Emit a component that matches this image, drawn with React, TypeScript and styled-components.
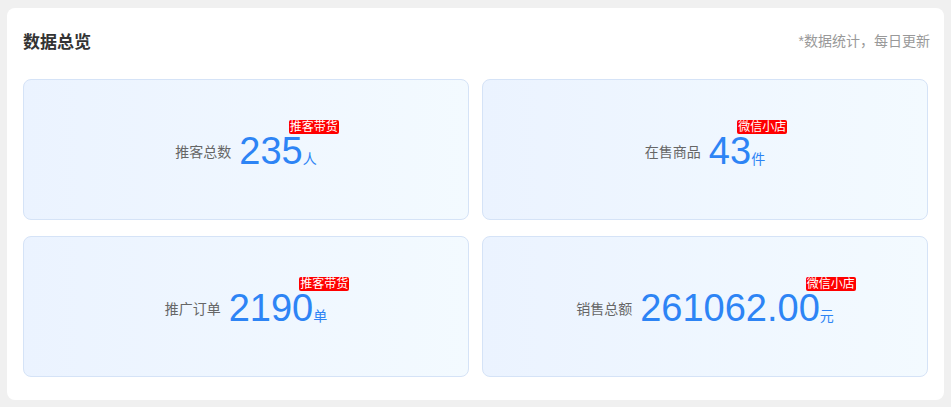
import { createGlobalStyle, styled } from 'styled-components';

const GlobalStyle = createGlobalStyle`
  html, body {
    margin: 0;
    padding: 0;
    background: #f0f0f0;
    font-family: 'Liberation Sans', Arial, 'Noto Sans CJK SC', sans-serif;
  }
`;

const SPage = styled.div`
  padding: 8px 7px 7px 7px;
`;

const SPanel = styled.div`
  background: #fff;
  border-radius: 8px;
  padding: 16px 16px 23px;
`;

const SHeader = styled.div`
  display: flex;
  align-items: center;
  justify-content: space-between;
  height: 32px;
  margin-bottom: 23px;
`;

const STitle = styled.h2`
  margin: 0;
  font-size: 17px;
  font-weight: 700;
  color: #333;
`;

const SNote = styled.span`
  font-size: 14px;
  color: #999;
  margin-right: -2px;
`;

const SGrid = styled.div`
  display: grid;
  grid-template-columns: 1fr 1fr;
  column-gap: 13px;
  row-gap: 16px;
`;

const SStatBox = styled.div`
  display: flex;
  align-items: center;
  justify-content: center;
  gap: 8px;
  height: 139px;
  border: 1px solid #d5e3f7;
  border-radius: 8px;
  background: linear-gradient(90deg, #ebf3ff 0%, #f3faff 100%);
`;

const SLabel = styled.span`
  font-size: 14px;
  color: #666;
  padding-top: 2px;
`;

const SValue = styled.span`
  display: inline-flex;
  align-items: baseline;
  padding-top: 2px;
`;

const SNumber = styled.span`
  position: relative;
  font-size: 38px;
  line-height: 38px;
  color: #2d84f5;
`;

const SUnit = styled.span`
  font-size: 14px;
  color: #2d84f5;
`;

const STag = styled.span`
  position: absolute;
  left: calc(100% - 14px);
  top: -12px;
  padding: 0 1px;
  font-size: 12px;
  line-height: 14px;
  color: #fff;
  background: #ff0000;
  border-radius: 2px;
  white-space: nowrap;
`;

type Stat = { label: string; value: string; unit: string; tag: string };

const stats: Stat[] = [
  { label: '推客总数', value: '235', unit: '人', tag: '推客带货' },
  { label: '在售商品', value: '43', unit: '件', tag: '微信小店' },
  { label: '推广订单', value: '2190', unit: '单', tag: '推客带货' },
  { label: '销售总额', value: '261062.00', unit: '元', tag: '微信小店' },
];

const App = () => (
  <SPage>
    <GlobalStyle />
    <SPanel>
      <SHeader>
        <STitle>数据总览</STitle>
        <SNote>*数据统计，每日更新</SNote>
      </SHeader>
      <SGrid>
        {stats.map((s) => (
          <SStatBox key={s.label}>
            <SLabel>{s.label}</SLabel>
            <SValue>
              <SNumber>
                {s.value}
                <STag>{s.tag}</STag>
              </SNumber>
              <SUnit>{s.unit}</SUnit>
            </SValue>
          </SStatBox>
        ))}
      </SGrid>
    </SPanel>
  </SPage>
);

export default App;
